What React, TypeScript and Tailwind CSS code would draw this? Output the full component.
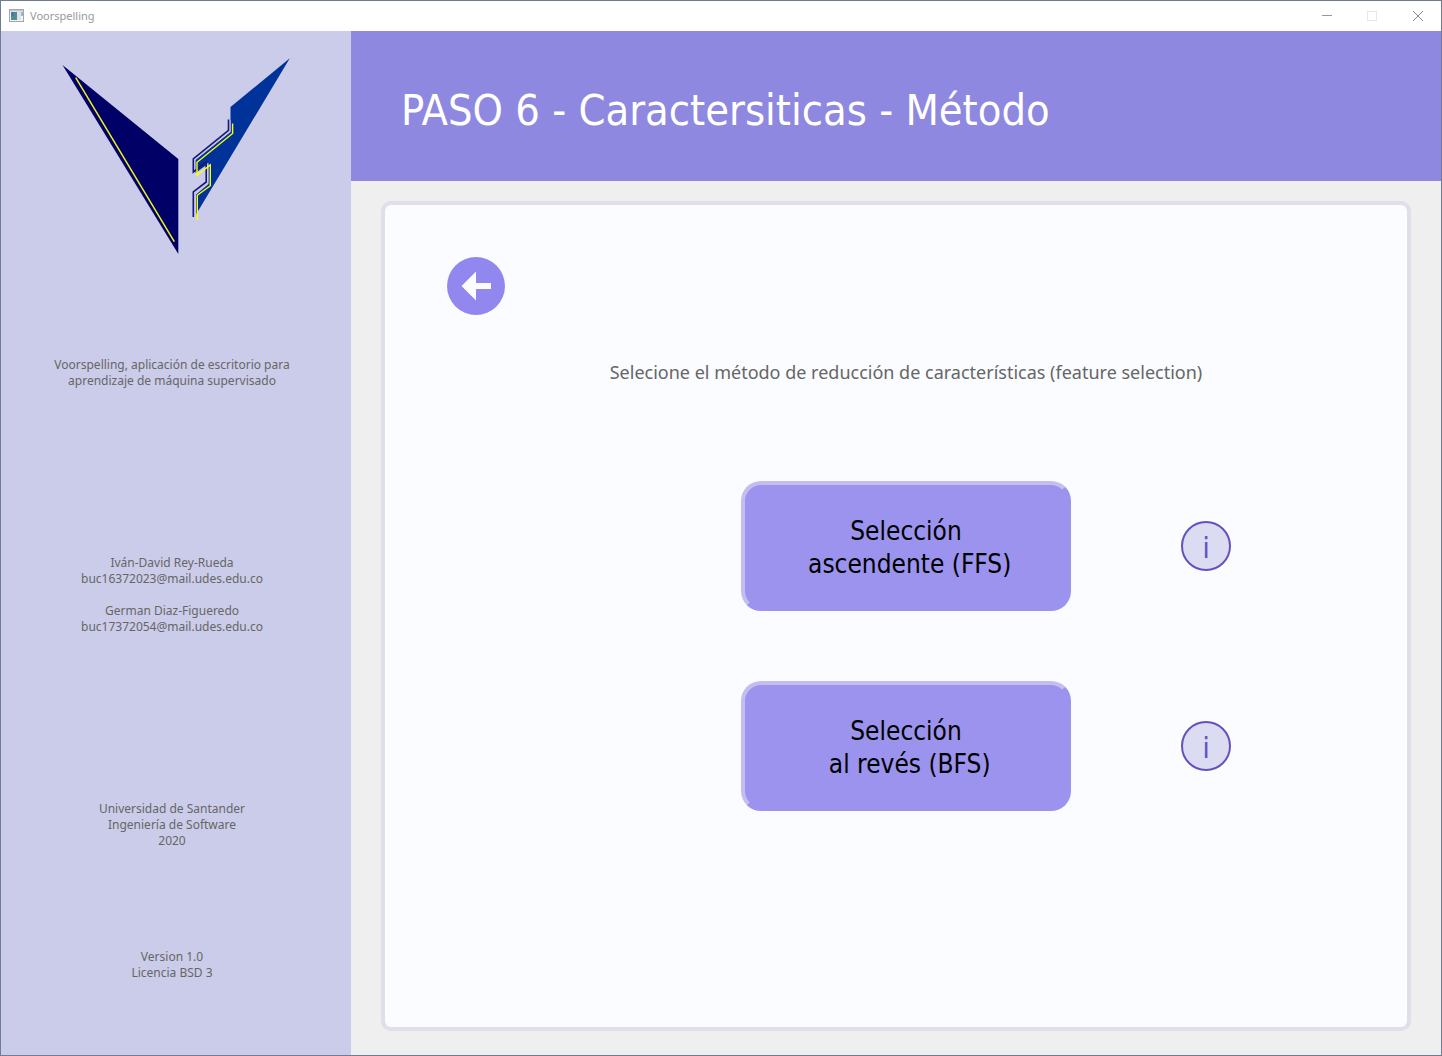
import React from "react";

function AppIcon() {
  return (
    <svg viewBox="0 0 15 14" className="h-[14px] w-[15px]" aria-hidden="true">
      <rect x="0.5" y="0.5" width="14" height="12" fill="#f4f4f4" stroke="#a3a7ad" />
      <rect x="1" y="1" width="13" height="1.5" fill="#c5c9d2" />
      <rect x="2" y="3" width="6" height="8" fill="#4f8f92" />
      <rect x="2" y="3" width="3" height="4" fill="#4b78a6" />
      <rect x="8" y="3" width="4" height="8" fill="#dfe3e3" />
      <rect x="12" y="3" width="2" height="4" fill="#9fb4c8" />
    </svg>
  );
}

function Logo() {
  return (
    <svg viewBox="60 55 232 202" className="ml-[59px] h-[202px] w-[232px]" role="img" aria-label="Voorspelling">
      <path d="M62.5 65 L178.3 159 V254 Z" fill="#000066" />
      <path d="M75.7 77.7 L174.3 241.7" stroke="#f2f21a" strokeWidth="1.5" fill="none" />
      <path
        d="M289.8 58.3 L230.5 107 V132 L195.5 160 V173 L208.5 163.5 V184 L196 194.5 V214.5 Z"
        fill="#003399"
      />
      <path
        d="M230 120 V131.5 L194.8 159.8 V172 M207.8 163 V183 L194.8 193.2 V217"
        stroke="#c5c7ea"
        strokeWidth="1"
        fill="none"
      />
      <path
        d="M228.5 119.5 V130.3 L193.3 158.8 V172 L206.2 161.8 V182 L193.3 191.8 V217"
        stroke="#171778"
        strokeWidth="1.6"
        fill="none"
      />
      <path
        d="M232.6 123.5 V133.5 L197 162.3 V175 L210.3 165 V185.7 L197.3 195.3 V220"
        stroke="#ffff00"
        strokeWidth="1.4"
        fill="none"
      />
    </svg>
  );
}

function TitleBar() {
  return (
    <header className="flex h-[30px] shrink-0 items-center bg-white pl-2 text-[#999999]">
      <AppIcon />
      <span className="ml-[6px] font-['Noto_Sans',sans-serif] text-[11px]">Voorspelling</span>
      <div className="ml-auto flex">
        <button aria-label="Minimizar" className="flex h-[30px] w-[45px] items-center justify-center">
          <svg viewBox="0 0 10 10" className="size-[10px]" stroke="#999999" fill="none"><path d="M0 4.5 H10" /></svg>
        </button>
        <button aria-label="Maximizar" disabled className="flex h-[30px] w-[46px] items-center justify-center">
          <svg viewBox="0 0 10 10" className="size-[10px]" stroke="#e6e6e6" fill="none"><rect x="0.5" y="0.5" width="9" height="9" /></svg>
        </button>
        <button aria-label="Cerrar" className="flex h-[30px] w-[46px] items-center justify-center">
          <svg viewBox="0 0 10 10" className="size-[10px]" stroke="#888888" fill="none"><path d="M0 0 L10 10 M10 0 L0 10" /></svg>
        </button>
      </div>
    </header>
  );
}

function Sidebar() {
  return (
    <aside className="w-[350px] shrink-0 bg-[#cbcce9] pt-6 font-['Noto_Sans',sans-serif] text-[12px] leading-4 text-[#666666]">
      <Logo />
      <div className="pr-2 text-center">
        <p className="mt-[100px]">
          Voorspelling, aplicación de escritorio para
          <br />
          aprendizaje de máquina supervisado
        </p>
        <p className="mt-[166px]">
          Iván-David Rey-Rueda
          <br />
          buc16372023@mail.udes.edu.co
        </p>
        <p className="mt-4">
          German Diaz-Figueredo
          <br />
          buc17372054@mail.udes.edu.co
        </p>
        <p className="mt-[166px]">
          Universidad de Santander
          <br />
          Ingeniería de Software
          <br />
          2020
        </p>
        <p className="mt-[100px]">
          Version 1.0
          <br />
          Licencia BSD 3
        </p>
      </div>
    </aside>
  );
}

function MethodRow({ first, second }: { first: string; second: string }) {
  return (
    <div className="grid grid-cols-[1fr_330px_1fr] items-center">
      <button className="col-start-2 h-[130px] rounded-[20px] border-4 border-t-[#c3beef] border-r-[#9b93ee] border-b-[#9b93ee] border-l-[#c3beef] bg-[#9b93ee] pt-1 text-[26px] leading-[33px] whitespace-pre text-black">
        {first}
        <br />
        {" " + second}
      </button>
      <button
        aria-label={`Información: ${first} ${second}`}
        className="ml-[110px] flex size-[50px] items-center justify-center rounded-full border-2 border-[#6650c0] bg-[#dbdbf2] pt-1 text-[29px] leading-none text-[#6650c0]"
      >
        i
      </button>
    </div>
  );
}

export default function App() {
  return (
    <div className="flex min-h-screen flex-col border border-[#6f7c93] font-['DejaVu_Sans_Condensed','DejaVu_Sans',sans-serif]">
      <TitleBar />
      <div className="flex grow">
        <Sidebar />
        <main className="flex grow flex-col bg-[#efefef]">
          <div className="flex h-[150px] shrink-0 items-center bg-[#8f88e0] pl-[50px] pt-2">
            <h1 className="text-[43px] leading-[54px] text-white">PASO 6 - Caractersiticas - Método</h1>
          </div>
          <section className="mx-[30px] mt-5 mb-6 grow rounded-[10px] border-4 border-[#e0deeb] bg-[#fbfcff] pt-[52px] pl-5">
            <button aria-label="Volver" className="ml-[42px] flex size-[58px] rounded-full bg-[#9187ee]">
              <svg viewBox="0 0 58 58" className="size-full" fill="#fbfcff">
                <path d="M14.5 29 L29 14.5 V26 H44 V32 H29 V43.5 Z" />
              </svg>
            </button>
            <p className="mt-11 text-center font-['Noto_Sans',sans-serif] text-[18px] leading-[26px] text-[#666666]">
              Selecione el método de reducción de características (feature selection)
            </p>
            <div className="mt-24 grid gap-[70px]">
              <MethodRow first="Selección" second="ascendente (FFS)" />
              <MethodRow first="Selección" second="al revés (BFS)" />
            </div>
          </section>
        </main>
      </div>
    </div>
  );
}
